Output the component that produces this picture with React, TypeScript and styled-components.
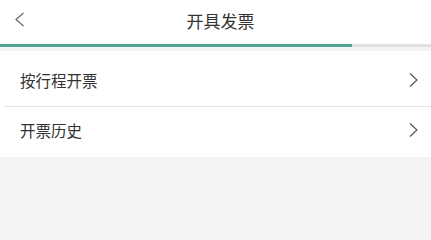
import React from 'react'
import styled, {createGlobalStyle} from 'styled-components'

const GlobalStyle = createGlobalStyle`
    html, body {
        margin: 0;
        padding: 0;
        background: #f4f4f4;
        font-family: "Noto Sans CJK SC", "Noto Sans", sans-serif;
        overflow: hidden;
    }
`

const progress = 0.817

const items = ['按行程开票', '开票历史']

const BackIcon = () => (
    <svg width="11" height="15" viewBox="0 0 11 15">
        <polyline points="9.5,1 2,7.5 9.5,14" fill="none" stroke="#666" strokeWidth="1.2"/>
    </svg>
)

const ArrowIcon = () => (
    <svg width="9" height="16" viewBox="0 0 9 16">
        <polyline points="1,1.5 8,8 1,14.5" fill="none" stroke="#555" strokeWidth="1.2"/>
    </svg>
)

export default function App() {
    return (
        <Page>
            <GlobalStyle/>
            <Header>
                <Back><BackIcon/></Back>
                <Title>开具发票</Title>
            </Header>
            <Track>
                <Fill style={{width: `${progress * 100}%`}}/>
            </Track>
            <List>
                {items.map((label, i) => (
                    <React.Fragment key={label}>
                        {i > 0 && <Divider/>}
                        <Row first={i === 0}>
                            <Label>{label}</Label>
                            <ArrowIcon/>
                        </Row>
                    </React.Fragment>
                ))}
            </List>
        </Page>
    )
}

const Page = styled.div`
    width: 431px;
    height: 222px;
    background: #f4f4f4;
`

const Header = styled.div`
    position: relative;
    height: 44px;
    background: #fff;
    display: flex;
    align-items: center;
    justify-content: center;
`

const Back = styled.div`
    position: absolute;
    left: 14px;
    top: 12px;
    display: flex;
`

const Title = styled.div`
    font-size: 17px;
    color: #333;
    padding-left: 10px;
    margin-top: -4px;
`

const Track = styled.div`
    height: 3px;
    background: #e2e2e2;
    margin-bottom: 4px;
`

const Fill = styled.div`
    height: 100%;
    background: #4ea597;
`

const List = styled.div`
    background: #fff;
`

const Divider = styled.div`
    height: 1px;
    margin-left: 4px;
    background: #e4e4e4;
`

const Row = styled.div<{first: boolean}>`
    height: ${({first}) => (first ? 55 : 50)}px;
    display: flex;
    align-items: center;
    justify-content: space-between;
    padding: ${({first}) => (first ? '2px 13px 0 20px' : '0 13px 4px 20px')};
    box-sizing: border-box;
`

const Label = styled.span`
    font-size: 15.5px;
    color: #333;
`
